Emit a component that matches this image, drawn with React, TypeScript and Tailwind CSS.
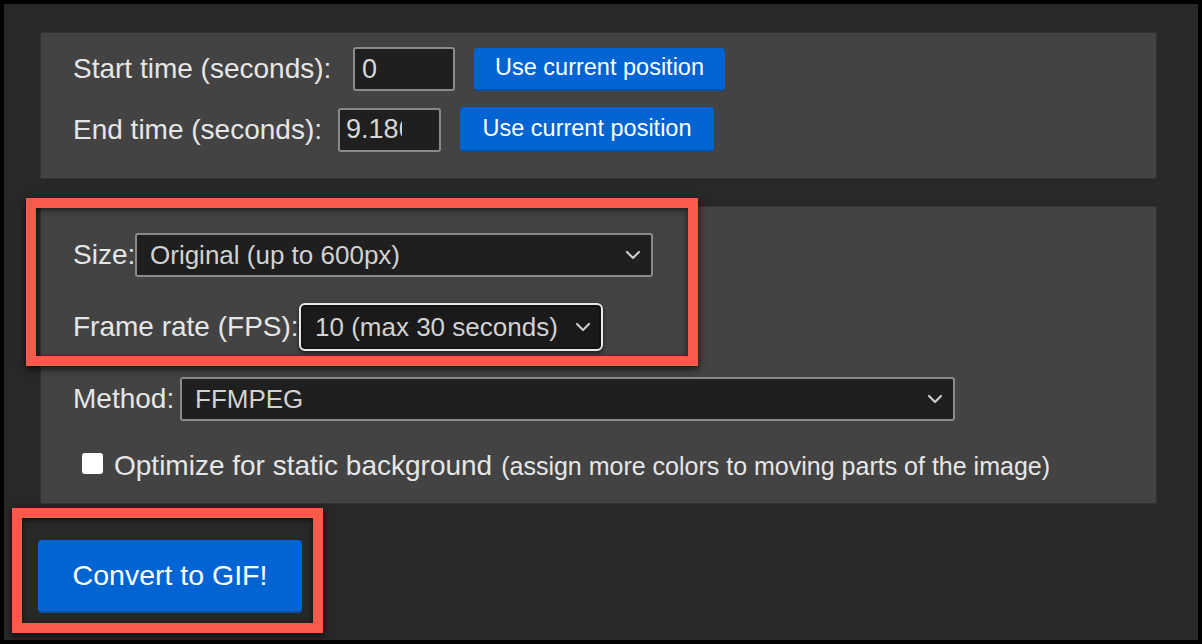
import React from 'react';

const font = { fontFamily: '"Liberation Sans", Arial, sans-serif' };

function Chevron() {
  return (
    <svg width="16" height="10" viewBox="0 0 16 10" className="shrink-0">
      <path d="M2 2l6 6 6-6" fill="none" stroke="#c9c9c9" strokeWidth="2.2" strokeLinecap="round" strokeLinejoin="round" />
    </svg>
  );
}

function FakeSelect({ value, className }: { value: string; className: string }) {
  return (
    <div className={`flex items-center justify-between bg-[#1f1f1f] pl-[13px] pr-[10px] text-[26px] text-[#d2d2d2] ${className}`}>
      <span className="whitespace-nowrap">{value}</span>
      <Chevron />
    </div>
  );
}

function SmallButton({ className }: { className: string }) {
  return (
    <button className={`flex items-center justify-center rounded-[4px] border-b-2 border-[#0350a8] bg-[#0164d3] text-[23.5px] text-white ${className}`}>
      Use current position
    </button>
  );
}

export default function App() {
  return (
    <div className="relative h-[644px] w-[1202px] bg-black p-[4px]" style={font}>
      <div className="h-full bg-[#282828] pl-[36px] pr-[41px] pt-[28px]">
        {/* time range */}
        <div className="h-[147px] border border-[#323232] bg-[#434343] px-[32px] pt-[14px] text-[28px] text-[#e6e6e6]">
          <div className="flex h-[44px] items-center">
            <span className="w-[280px] whitespace-nowrap">Start time (seconds):</span>
            <div className="flex h-[44px] w-[102px] items-center rounded-[3px] border-2 border-[#8a8a8a] bg-[#1f1f1f] pl-[7px] text-[27px] text-[#d6d6d6]">
              0
            </div>
            <SmallButton className="ml-[19px] h-[43px] w-[251px]" />
          </div>
          <div className="mt-[16px] flex h-[45px] items-center">
            <span className="w-[265px] whitespace-nowrap">End time (seconds):</span>
            <div className="flex h-[44px] w-[103px] items-center rounded-[3px] border-2 border-[#8a8a8a] bg-[#1f1f1f] pl-[6px] text-[27px] text-[#d6d6d6]">
              <div className="w-[56px] overflow-hidden whitespace-nowrap">9.186</div>
            </div>
            <SmallButton className="ml-[19px] h-[45px] w-[254px]" />
          </div>
        </div>

        {/* output settings */}
        <div className="mt-[27px] h-[298px] border border-[#323232] bg-[#434343] px-[32px] pt-[26px] text-[28px] text-[#e6e6e6]">
          <div className="flex h-[44px] items-center">
            <span className="w-[62px] whitespace-nowrap">Size:</span>
            <FakeSelect value="Original (up to 600px)" className="h-[44px] w-[518px] rounded-[3px] border-2 border-[#8a8a8a]" />
          </div>
          <div className="mt-[26px] flex h-[48px] items-center">
            <span className="w-[226px] whitespace-nowrap">Frame rate (FPS):</span>
            <FakeSelect
              value="10 (max 30 seconds)"
              className="h-[48px] w-[304px] rounded-[6px] border-2 border-[#e8e8e8] shadow-[inset_0_0_0_2px_#111,0_2px_4px_rgba(0,0,0,0.6)] !pl-[14px] !bg-[#1a1a1a]"
            />
          </div>
          <div className="mt-[26px] flex h-[44px] items-center">
            <span className="w-[107px] whitespace-nowrap">Method:</span>
            <FakeSelect value="FFMPEG" className="h-[44px] w-[775px] rounded-[3px] border-2 border-[#8a8a8a]" />
          </div>
          <div className="mt-[31px] flex h-[22px] items-center">
            <div className="ml-[9px] h-[21px] w-[21px] rounded-[3px] bg-white" />
            <span className="ml-[11px] mt-[6px] whitespace-nowrap">Optimize for static background</span>
            <span className="ml-[9px] mt-[8px] whitespace-nowrap text-[25px]">(assign more colors to moving parts of the image)</span>
          </div>
        </div>

        <button className="-ml-[2px] mt-[36px] flex h-[73px] w-[264px] items-center justify-center rounded-[4px] border-b-2 border-[#0350a8] bg-[#0164d3] text-[28.5px] text-white">
          Convert to GIF!
        </button>
      </div>

      {/* annotation boxes */}
      <div className="absolute left-[26px] top-[198px] h-[168px] w-[672px] border-[10px] border-[#fa5a4b] shadow-[0_3px_8px_rgba(0,0,0,0.7),inset_0_2px_6px_rgba(0,0,0,0.6)]" />
      <div className="absolute left-[12px] top-[508px] h-[125px] w-[311px] border-[10px] border-[#fa5a4b] shadow-[0_3px_8px_rgba(0,0,0,0.7),inset_0_2px_6px_rgba(0,0,0,0.6)]" />
    </div>
  );
}
